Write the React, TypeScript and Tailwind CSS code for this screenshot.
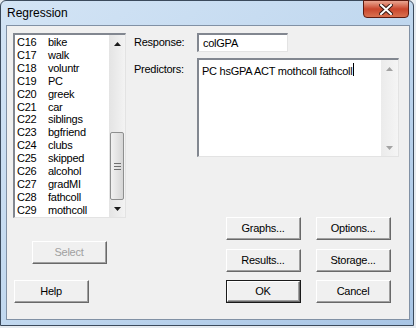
import React from 'react';

const variables: [string, string][] = [
  ['C16', 'bike'],
  ['C17', 'walk'],
  ['C18', 'voluntr'],
  ['C19', 'PC'],
  ['C20', 'greek'],
  ['C21', 'car'],
  ['C22', 'siblings'],
  ['C23', 'bgfriend'],
  ['C24', 'clubs'],
  ['C25', 'skipped'],
  ['C26', 'alcohol'],
  ['C27', 'gradMI'],
  ['C28', 'fathcoll'],
  ['C29', 'mothcoll'],
];

function Arrow({ down = false, color = '#1a1a1a' }: { down?: boolean; color?: string }) {
  return (
    <svg width="7" height="4" viewBox="0 0 7 4">
      {down ? <polygon points="0,0 7,0 3.5,4" fill={color} /> : <polygon points="3.5,0 7,4 0,4" fill={color} />}
    </svg>
  );
}

function Button({ label, disabled = false, isDefault = false }: { label: string; disabled?: boolean; isDefault?: boolean }) {
  return (
    <div className={isDefault ? 'w-[75px] h-[23px] border border-[#1a1a1a]' : 'w-[75px] h-[23px]'}>
      <div className="w-full h-full border-t border-l border-t-white border-l-white border-b border-r border-b-[#696969] border-r-[#696969] bg-[#f0f0f0]">
        <div
          className={
            'w-full h-full flex items-center justify-center border-b border-r border-b-[#a0a0a0] border-r-[#a0a0a0] ' +
            (disabled ? 'text-[#a0a0a0]' : 'text-black')
          }
        >
          {label}
        </div>
      </div>
    </div>
  );
}

export default function App() {
  return (
    <div className="w-[416px] h-[328px] bg-[#e6ebf0] font-['Liberation_Sans',Arial,sans-serif] text-[11px] tracking-[-0.25px] overflow-hidden">
      <div className="w-[414px] h-[326px] flex flex-col rounded-t-[6px] border border-[#3b4a5c] bg-gradient-to-br from-[#d3e4f5] via-[#c1d8ef] to-[#a8c5e5]">
        {/* title bar */}
        <div className="h-[24px] flex items-start justify-between">
          <span className="pl-[6px] pt-[3px] text-[12px] tracking-normal text-black">Regression</span>
          <div className="mr-[4px] -mt-px w-[46px] h-[18px] rounded-b-[4px] border border-[#5c1a10] bg-gradient-to-b from-[#e9a592] via-[#c9452c] to-[#d9704f] flex items-center justify-center">
            <svg width="14" height="11" viewBox="0 0 14 11">
              <path d="M2 1 L12 10 M12 1 L2 10" stroke="#3a1a14" strokeWidth="4" strokeLinecap="square" />
              <path d="M2 1 L12 10 M12 1 L2 10" stroke="#ffffff" strokeWidth="2" strokeLinecap="square" />
            </svg>
          </div>
        </div>

        {/* client area */}
        <div className="ml-[5px] w-[404px] h-[295px] border border-[#8191a5] bg-[#f0f0f0] flex">
          {/* left column */}
          <div className="pl-[6px] pt-[7px] flex flex-col">
            <div className="w-[113px] h-[185px] border-t-2 border-l-2 border-t-[#828790] border-l-[#828790] border-b border-r border-b-[#e3e3e3] border-r-[#e3e3e3] bg-white flex">
              <div className="flex-1 pl-[2px] pt-[1px] flex flex-col">
                {variables.map(([col, name]) => (
                  <div key={col} className="h-[13px] flex items-center leading-none text-black">
                    <span className="w-[31px]">{col}</span>
                    <span>{name}</span>
                  </div>
                ))}
              </div>
              <div className="w-[16px] flex flex-col bg-gradient-to-r from-[#e4e4e4] to-[#f3f3f3]">
                <div className="h-[17px] flex items-center justify-center">
                  <Arrow />
                </div>
                <div className="h-[80px]" />
                <div className="mx-[1px] h-[68px] rounded-[2px] border border-[#8e8f8f] bg-gradient-to-r from-[#f1f1f1] to-[#d6d6d6] flex flex-col items-center justify-center gap-[2px]">
                  <div className="w-[7px] h-px bg-[#6f6f6f]" />
                  <div className="w-[7px] h-px bg-[#6f6f6f]" />
                  <div className="w-[7px] h-px bg-[#6f6f6f]" />
                </div>
                <div className="flex-1 flex items-center justify-center">
                  <Arrow down />
                </div>
              </div>
            </div>
            <div className="mt-[23px] ml-[19px]">
              <Button label="Select" disabled />
            </div>
            <div className="mt-[16px] ml-[1px]">
              <Button label="Help" />
            </div>
          </div>

          {/* right column */}
          <div className="ml-[8px] pt-[7px] flex flex-col">
            <div className="flex items-center">
              <span className="w-[63px] text-black">Response:</span>
              <div className="w-[91px] h-[19px] border-t-2 border-l-2 border-t-[#828790] border-l-[#828790] border-b border-r border-b-[#e3e3e3] border-r-[#e3e3e3] bg-white pl-[4px] flex items-center text-black">
                colGPA
              </div>
            </div>
            <div className="mt-[6px] flex items-start">
              <span className="w-[63px] pt-[3px] text-black">Predictors:</span>
              <div className="w-[202px] h-[99px] border-t-2 border-l-2 border-t-[#828790] border-l-[#828790] border-b border-r border-b-[#e3e3e3] border-r-[#e3e3e3] bg-white flex">
                <div className="flex-1 pl-[3px] pt-[3px] text-black flex items-start">
                  <span>PC hsGPA ACT mothcoll fathcoll</span>
                  <span className="ml-px w-px h-[13px] bg-black" />
                </div>
                <div className="w-[17px] flex flex-col bg-gradient-to-r from-[#ebebeb] to-[#f5f5f5]">
                  <div className="h-[17px] flex items-center justify-center">
                    <Arrow color="#a3a3a3" />
                  </div>
                  <div className="flex-1" />
                  <div className="h-[17px] flex items-center justify-center">
                    <Arrow down color="#a3a3a3" />
                  </div>
                </div>
              </div>
            </div>
            <div className="mt-[60px] ml-[92px] flex flex-col gap-[9px]">
              <div className="flex gap-[15px]">
                <Button label="Graphs..." />
                <Button label="Options..." />
              </div>
              <div className="flex gap-[15px]">
                <Button label="Results..." />
                <Button label="Storage..." />
              </div>
              <div className="-mt-px flex gap-[15px]">
                <Button label="OK" isDefault />
                <Button label="Cancel" />
              </div>
            </div>
          </div>
        </div>
      </div>
    </div>
  );
}
